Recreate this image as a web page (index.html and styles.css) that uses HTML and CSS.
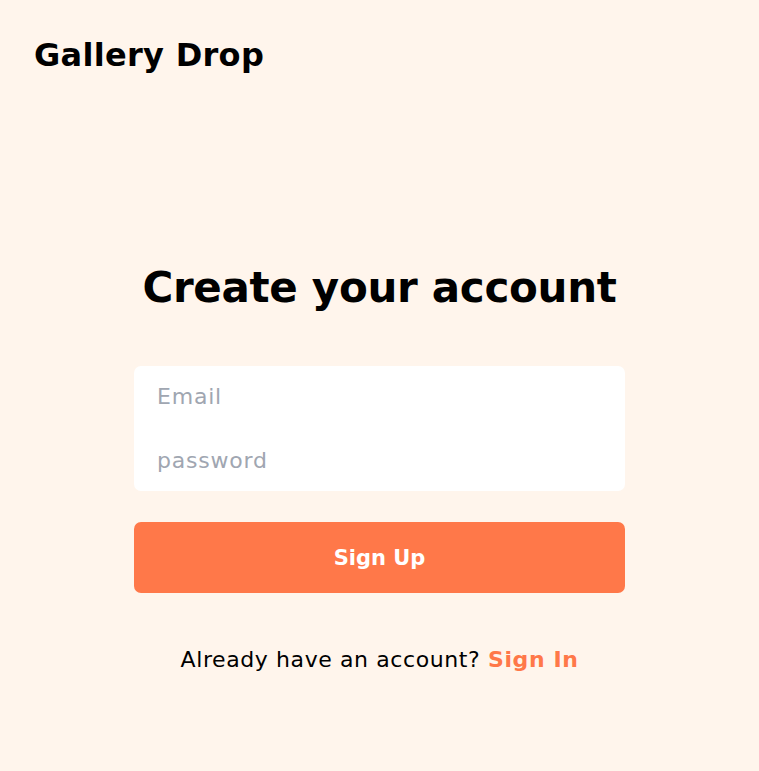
FILE: index.html
```html
<!DOCTYPE html>
<html lang="en">
<head>
<meta charset="utf-8">
<title>Gallery Drop - Sign Up</title>
<link rel="stylesheet" href="styles.css">
</head>
<body>
<header class="header">
  <div class="logo">Gallery Drop</div>
</header>
<main class="main">
  <h1 class="title">Create your account</h1>
  <form class="form">
    <div class="fields">
      <input class="field" type="email" placeholder="Email">
      <input class="field" type="password" placeholder="password">
    </div>
    <button class="btn" type="button">Sign Up</button>
  </form>
  <p class="alt">Already have an account? <a class="alt-link" href="#">Sign In</a></p>
</main>
</body>
</html>
```
FILE: styles.css
```css
* { box-sizing: border-box; }
html, body {
  margin: 0;
  padding: 0;
  background: #fff5ec;
  font-family: "DejaVu Sans", "Open Sans", sans-serif;
  color: #000;
}
.header {
  padding: 29px 34px 0;
}
.logo {
  font-size: 32px;
  font-weight: 700;
  line-height: 52px;
  letter-spacing: 0.3px;
}
.main {
  display: flex;
  flex-direction: column;
  align-items: center;
  padding-top: 177px;
}
.title {
  margin: 0;
  font-size: 42px;
  font-weight: 700;
  line-height: 60px;
  letter-spacing: -0.3px;
}
.form {
  width: 491px;
  margin-top: 48px;
  display: flex;
  flex-direction: column;
  gap: 31px;
}
.fields {
  background: #fff;
  border-radius: 7px;
  padding: 5px 0 6px;
  display: flex;
  flex-direction: column;
}
.field {
  border: none;
  outline: none;
  background: transparent;
  font-family: inherit;
  font-size: 22px;
  letter-spacing: 0.8px;
  padding: 0 23px;
  height: 50px;
  color: #333;
}
.field + .field { margin-top: 14px; }
.field::placeholder { color: #a0a6b1; }
.btn {
  height: 71px;
  border: none;
  border-radius: 7px;
  background: #ff7849;
  color: #fff;
  font-family: inherit;
  font-size: 21px;
  font-weight: 700;
  cursor: pointer;
}
.alt {
  margin: 52px 0 0;
  font-size: 22px;
  line-height: 30px;
  letter-spacing: 0.6px;
}
.alt-link {
  color: #ff7849;
  font-weight: 700;
  text-decoration: none;
}
```
